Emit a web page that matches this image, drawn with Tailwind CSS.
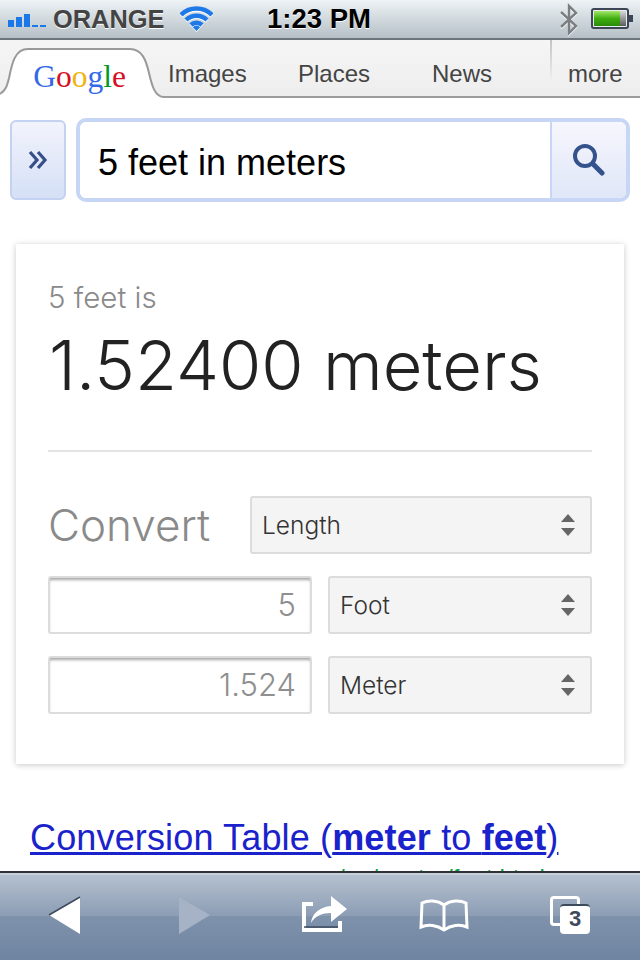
<!DOCTYPE html>
<html lang="en">
<head>
<meta charset="UTF-8">
<title>5 feet in meters</title>
<script src="https://cdn.jsdelivr.net/npm/@tailwindcss/browser@4"></script>
</head>
<body class="bg-white font-['Liberation_Sans',sans-serif]">
<div class="w-[640px] h-[960px] overflow-hidden flex flex-col relative">

  <!-- status bar -->
  <div class="h-[40px] shrink-0 flex items-center bg-gradient-to-b from-[#eef3f6] to-[#b5c0c6] border-b-2 border-[#6d757b] relative">
    <svg class="ml-[8px] mt-[2px]" width="40" height="16" viewBox="0 0 40 16">
      <rect x="0" y="8" width="6" height="7" fill="#1a78e8"/>
      <rect x="8" y="5" width="6" height="10" fill="#1a78e8"/>
      <rect x="16" y="2" width="6" height="13" fill="#1a78e8"/>
      <rect x="24" y="13" width="6" height="2" fill="#1a78e8"/>
      <rect x="32" y="13" width="6" height="2" fill="#1a78e8"/>
    </svg>
    <span class="ml-[5px] text-[25.4px] leading-none font-bold text-[#444] mt-[1px] [text-shadow:0_1px_0_#fff]">ORANGE</span>
    <svg class="ml-[16px] drop-shadow-[0_1px_0_#fff]" width="33" height="26" viewBox="0 0 33 26" fill="none" stroke="#1f7ae8" stroke-width="4.5">
      <path d="M1 9 A22 22 0 0 1 32 9"/>
      <path d="M6 14 A15 15 0 0 1 27 14"/>
      <path d="M11 19 A8 8 0 0 1 22 19"/>
      <path d="M16.5 25 L13 21.5 A4 4 0 0 1 20 21.5 Z" fill="#1f7ae8" stroke="none"/>
    </svg>
    <span class="absolute left-[267px] top-[3px] text-[27.5px] leading-[32px] font-bold text-black [text-shadow:0_1px_0_#fff]">1:23 PM</span>
    <svg class="absolute left-[559px] top-[3px] drop-shadow-[0_1px_0_#fff]" width="20" height="33" viewBox="0 0 20 33" fill="none" stroke="#7c7f82" stroke-width="2.4">
      <path d="M2 9 L17 23 L10 30 L10 3 L17 10 L2 24"/>
    </svg>
    <svg class="absolute left-[591px] top-[8px]" width="43" height="22" viewBox="0 0 43 22">
      <defs>
        <linearGradient id="batt" x1="0" y1="0" x2="0" y2="1">
          <stop offset="0" stop-color="#a4e868"/><stop offset="0.5" stop-color="#3fae10"/><stop offset="1" stop-color="#2a8a08"/>
        </linearGradient>
        <linearGradient id="battEnd" x1="0" y1="0" x2="0" y2="1">
          <stop offset="0" stop-color="#d8d8d8"/><stop offset="1" stop-color="#5c5c5c"/>
        </linearGradient>
      </defs>
      <rect x="1" y="1" width="36" height="19" rx="2" fill="#e8edf0" stroke="#3d4654" stroke-width="2"/>
      <rect x="3" y="3" width="26" height="15" fill="url(#batt)"/>
      <rect x="29" y="3" width="6" height="15" fill="url(#battEnd)"/>
      <rect x="38" y="7" width="4" height="7" fill="#3d4654"/>
    </svg>
  </div>

  <!-- tabs -->
  <div class="h-[58px] shrink-0 flex bg-gradient-to-b from-[#f5f5f5] to-[#eeeeee] border-b-2 border-[#9c9c9c] relative">
    <div class="w-[160px] relative flex justify-center">
      <svg class="absolute left-0 top-[8px]" width="164" height="52" viewBox="0 0 164 52">
        <path d="M0 46 C6 42 7 38 9 30 C12 15 15 1 28 1 L130 1 C142 1 146 12 149 25 C152 38 155 49 164 49 L164 52 L0 52 Z" fill="#fff"/>
        <path d="M0 46 C6 42 7 38 9 30 C12 15 15 1 28 1 L130 1 C142 1 146 12 149 25 C152 38 155 49 164 49" fill="none" stroke="#999" stroke-width="2"/>
      </svg>
      <span class="relative mt-[18px] ml-[-1px] text-[31.5px] leading-[38px] font-['Liberation_Serif',serif]"><span class="text-[#3369e8]">G</span><span class="text-[#d50f25]">o</span><span class="text-[#eeb211]">o</span><span class="text-[#3369e8]">g</span><span class="text-[#009925]">l</span><span class="text-[#d50f25]">e</span></span>
    </div>
    <span class="absolute left-[168px] top-[19px] text-[24px] leading-[30px] text-[#444]">Images</span>
    <span class="absolute left-[298px] top-[19px] text-[24px] leading-[30px] text-[#444]">Places</span>
    <span class="absolute left-[432px] top-[19px] text-[24px] leading-[30px] text-[#444]">News</span>
    <div class="absolute left-[550px] top-0 h-[40px] w-[2px] bg-gradient-to-b from-[#c4c4c4] to-[#eeeeee]"></div>
    <span class="absolute left-[568px] top-[19px] text-[24px] leading-[30px] text-[#444]">more</span>
  </div>

  <!-- search -->
  <div class="flex mt-[22px] ml-[10px] h-[80px] shrink-0">
    <div class="w-[56px] h-[80px] rounded-[6px] border-2 border-[#c3d2f0] bg-gradient-to-b from-[#f2f3fc] to-[#d5e0f6] flex items-center justify-center">
      <svg width="20" height="20" viewBox="0 0 20 20" fill="none" stroke="#364f88" stroke-width="3.2"><path d="M2 2 L9 10 L2 18"/><path d="M10 2 L17 10 L10 18"/></svg>
    </div>
    <div class="w-[554px] h-[84px] mt-[-2px] ml-[10px] rounded-[10px] border-4 border-[#c6d6f4] flex overflow-hidden">
      <div class="flex-1 pl-[18px] pt-[3px] text-[36px] leading-[76px] text-black bg-white">5 feet in meters</div>
      <div class="w-[76px] border-l-2 border-[#c6d6f4] bg-gradient-to-b from-[#f7f6fd] to-[#dfe7f8] flex items-center justify-center">
        <svg class="mr-[2px] mb-[2px]" width="34" height="34" viewBox="0 0 34 34" fill="none" stroke="#34528c"><circle cx="14" cy="14" r="10" stroke-width="4"/><path d="M22 22 L31 31" stroke-width="5" stroke-linecap="round"/></svg>
      </div>
    </div>
  </div>

  <!-- conversion card -->
  <div class="ml-[16px] mt-[44px] w-[608px] h-[520px] shrink-0 bg-white shadow-[0_1px_6px_rgba(0,0,0,0.22)] px-[32px] font-['Inter',sans-serif] font-light">
    <div class="pt-[36px] text-[29.5px] leading-[34px] text-[#8a8a8a]">5 feet is</div>
    <div class="text-[68.5px] leading-[84px] mt-[10px] ml-[1px] text-[#222] whitespace-nowrap">1.52400 meters</div>
    <div class="border-t-2 border-[#e4e4e4] mt-[42px]"></div>
    <div class="flex items-center mt-[44px] h-[58px]">
      <div class="w-[202px] text-[44px] leading-[58px] text-[#8a8a8a]">Convert</div>
      <div class="flex-1 h-[58px] rounded-[3px] border-2 border-[#dcdcdc] bg-[#f4f4f4] flex items-center justify-between pl-[10px] pr-[14px] text-[24.5px] text-[#333]">
        <span>Length</span>
        <svg width="16" height="24" viewBox="0 0 16 24" fill="#666"><path d="M8 1 L15 9 L1 9 Z"/><path d="M1 15 L15 15 L8 23 Z"/></svg>
      </div>
    </div>
    <div class="flex gap-[16px] mt-[22px] h-[58px]">
      <div class="w-[264px] rounded-[3px] border-2 border-[#dcdcdc] bg-white shadow-[inset_0_3px_3px_-1px_rgba(0,0,0,0.35)] flex items-center justify-end pr-[14px] text-[31px] text-[#8f8f8f]">5</div>
      <div class="w-[264px] rounded-[3px] border-2 border-[#dcdcdc] bg-[#f4f4f4] flex items-center justify-between pl-[10px] pr-[14px] text-[24.5px] text-[#333]">
        <span>Foot</span>
        <svg width="16" height="24" viewBox="0 0 16 24" fill="#666"><path d="M8 1 L15 9 L1 9 Z"/><path d="M1 15 L15 15 L8 23 Z"/></svg>
      </div>
    </div>
    <div class="flex gap-[16px] mt-[22px] h-[58px]">
      <div class="w-[264px] rounded-[3px] border-2 border-[#dcdcdc] bg-white shadow-[inset_0_3px_3px_-1px_rgba(0,0,0,0.35)] flex items-center justify-end pr-[14px] text-[31px] text-[#8f8f8f]">1.524</div>
      <div class="w-[264px] rounded-[3px] border-2 border-[#dcdcdc] bg-[#f4f4f4] flex items-center justify-between pl-[10px] pr-[14px] text-[24.5px] text-[#333]">
        <span>Meter</span>
        <svg width="16" height="24" viewBox="0 0 16 24" fill="#666"><path d="M8 1 L15 9 L1 9 Z"/><path d="M1 15 L15 15 L8 23 Z"/></svg>
      </div>
    </div>
  </div>

  <!-- result link, url line runs under the toolbar -->
  <a href="#" class="block ml-[30px] mt-[54px] text-[36px] leading-[40px] tracking-[0.15px] text-[#1a22cc] underline whitespace-nowrap">Conversion Table (<b>meter</b> to <b>feet</b>)</a>
  <div class="ml-[338px] mt-[4px] text-[24px] leading-[32px] text-[#0a9a3a] whitespace-nowrap">/on/ meter/feet.html</div>

  <!-- bottom toolbar -->
  <div class="absolute left-0 top-[871px] w-[640px] h-[89px] border-t-2 border-[#2f3338] bg-[linear-gradient(#b6c2d0,#8c9db4_49%,#7f92ac_50%,#6f84a1)] flex items-center">
    <div class="absolute inset-x-0 top-0 h-[2px] bg-[#c8d1db]"></div>
    <svg class="ml-[48px] mt-[-2px]" width="34" height="40" viewBox="0 0 34 40"><path d="M32 1 L1 19 L32 38 Z" fill="#fff"/><path d="M32 1 L1 19" stroke="#3d4a5c" stroke-width="1.5"/></svg>
    <svg class="ml-[95px] mt-[-2px]" width="34" height="40" viewBox="0 0 34 40"><path d="M2 1 L33 19 L2 38 Z" fill="#a6b3c6"/></svg>
    <svg class="ml-[89px] mt-[-6px]" width="50" height="40" viewBox="0 0 50 40">
      <path d="M13 10 L4 10 L4 36 L40 36 L40 27" fill="none" stroke="#fff" stroke-width="4"/>
      <path d="M4 33 L38 33" stroke="#3d4a5c" stroke-width="1.5"/>
      <path d="M11 29 C12 19 20 13 31 12 L31 2 L47 15 L31 28 L31 19 C22 19 15 22 11 29 Z" fill="#fff"/>
    </svg>
    <svg class="ml-[69px] mt-[-4px]" width="50" height="36" viewBox="0 0 50 36" fill="none" stroke="#fff" stroke-width="3">
      <path d="M25 8 C18 3 9 3 3 6 L2 30 C9 27 18 28 25 33 C32 28 41 27 48 30 L47 6 C41 3 32 3 25 8 Z"/>
      <path d="M25 8 L25 33"/>
    </svg>
    <div class="relative ml-[81px] w-[40px] h-[40px] mt-[-2px]">
      <div class="absolute left-0 top-0 w-[30px] h-[30px] rounded-[4px] border-[3px] border-white"></div>
      <div class="absolute left-[10px] top-[8px] w-[30px] h-[30px] rounded-[4px] bg-white border-t-2 border-[#3d4a5c] text-center text-[22px] leading-[26px] font-bold text-[#3d4a5c]">3</div>
    </div>
  </div>
</div>
</body>
</html>
